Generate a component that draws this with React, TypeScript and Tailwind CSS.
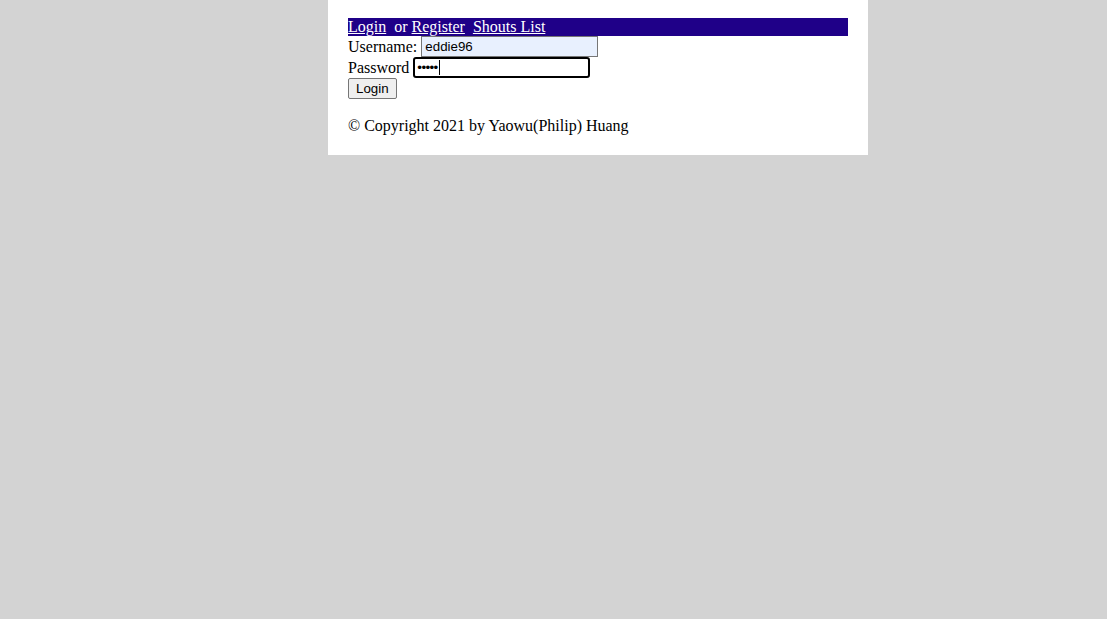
import React from "react";

export default function App() {
  return (
    <div className="min-h-screen bg-[#d3d3d3] font-['Liberation_Serif',serif] text-[16px] text-black">
      <div className="ml-[328px] w-[540px] bg-white px-5 pt-[18px] pb-[4px]">
        <div className="h-[18px] bg-[#1f0088] leading-[18px] whitespace-pre text-white">
          <a href="#" className="text-white underline">Login</a>
          <span>{"  or "}</span>
          <a href="#" className="text-white underline">Register</a>
          <span>{"  "}</span>
          <a href="#" className="text-white underline">Shouts List</a>
        </div>
        <div className="flex h-[21px] items-center">
          <span>Username:</span>
          <input
            readOnly
            value="eddie96"
            className="ml-1 h-[21px] w-[177px] border border-[#767676] bg-[#e8f0fe] px-[3px] font-['Liberation_Sans',sans-serif] text-[13.33px] outline-none"
          />
        </div>
        <div className="flex h-[21px] items-center">
          <span>Password</span>
          <div className="ml-1 flex h-[21px] w-[177px] items-center rounded-[3px] border-2 border-black px-[2px] font-['Liberation_Sans',sans-serif] text-[13.33px] leading-none">
            <span className="tracking-[-0.6px]">•••••</span>
            <span className="ml-[1px] h-[15px] w-px bg-black" />
          </div>
        </div>
        <div className="flex h-[21px] items-center">
          <button className="h-[21px] rounded-[2px] border border-[#767676] bg-[#efefef] px-[7px] font-['Liberation_Sans',sans-serif] text-[13.33px] leading-none">
            Login
          </button>
        </div>
        <p className="mt-[18px] mb-4 leading-[18px]">© Copyright 2021 by Yaowu(Philip) Huang</p>
      </div>
    </div>
  );
}
